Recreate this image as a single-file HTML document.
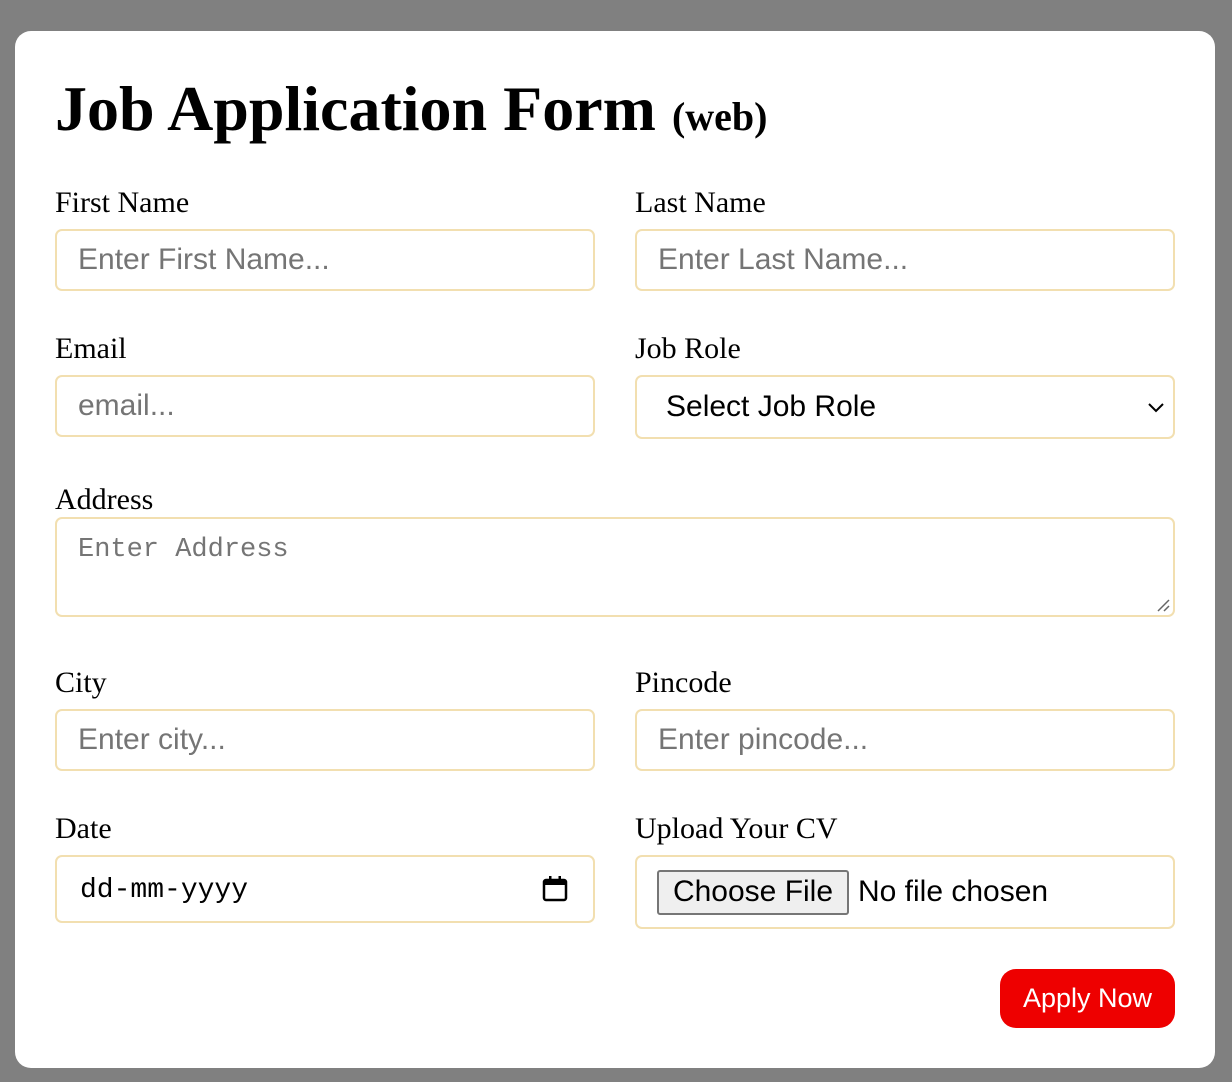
<!DOCTYPE html>
<html><head><meta charset="utf-8"><style>
*{box-sizing:border-box;margin:0;padding:0}
html,body{width:1232px;height:1082px;background:#808080;overflow:hidden}
.card{position:absolute;left:15px;top:31px;width:1200px;height:1037px;background:#fff;border-radius:16px}
.a{position:absolute}
h1{position:absolute;left:55px;top:77px;font:bold 64px/1 "Liberation Serif",serif;color:#000;white-space:nowrap}
h1 small{font-size:40px}
.lbl{position:absolute;font:30px/1 "Liberation Serif",serif;color:#000;white-space:nowrap}
.in{position:absolute;border:2px solid #f2dfb0;border-radius:7px;background:#fff;font:30px/1 "Liberation Sans",sans-serif;color:#757575;padding-left:21px;display:flex;align-items:center;white-space:nowrap}
</style></head><body>
<div class="card"></div>
<h1>Job Application Form <small>(web)</small></h1>

<div class="lbl" style="left:55px;top:188px">First Name</div>
<div class="in" style="left:55px;top:229px;width:540px;height:62px">Enter First Name...</div>
<div class="lbl" style="left:635px;top:188px">Last Name</div>
<div class="in" style="left:635px;top:229px;width:540px;height:62px">Enter Last Name...</div>

<div class="lbl" style="left:55px;top:334px">Email</div>
<div class="in" style="left:55px;top:375px;width:540px;height:62px">email...</div>
<div class="lbl" style="left:635px;top:334px">Job Role</div>
<div class="in" style="left:635px;top:375px;width:540px;height:64px;color:#000;padding-left:29px">Select Job Role
<svg class="a" style="right:8px;top:24px" width="18" height="12" viewBox="0 0 18 12"><path d="M2 3l7 7 7-7" fill="none" stroke="#000" stroke-width="2"/></svg></div>

<div class="lbl" style="left:55px;top:485px">Address</div>
<div class="in" style="left:55px;top:517px;width:1120px;height:100px;align-items:flex-start;padding-top:18px;font:27px/1 'Liberation Mono',monospace;color:#757575">Enter Address
<svg class="a" style="right:2px;bottom:2px" width="16" height="16" viewBox="0 0 16 16"><path d="M14 3L3 14M14 9L9 14" stroke="#666" stroke-width="1.5"/></svg></div>

<div class="lbl" style="left:55px;top:668px">City</div>
<div class="in" style="left:55px;top:709px;width:540px;height:62px">Enter city...</div>
<div class="lbl" style="left:635px;top:668px">Pincode</div>
<div class="in" style="left:635px;top:709px;width:540px;height:62px">Enter pincode...</div>

<div class="lbl" style="left:55px;top:814px">Date</div>
<div class="in" style="left:55px;top:855px;width:540px;height:68px;color:#000;font:28px/1 'Liberation Mono',monospace;padding-left:23px;padding-top:4px">dd-mm-yyyy
<svg class="a" style="left:485px;top:18px" width="26" height="28" viewBox="0 0 26 28"><rect x="2" y="5" width="22" height="20" rx="2" fill="none" stroke="#000" stroke-width="2.5"/><rect x="2" y="5" width="22" height="5" fill="#000"/><rect x="7" y="1" width="2.5" height="6" fill="#000"/><rect x="16.5" y="1" width="2.5" height="6" fill="#000"/></svg></div>
<div class="lbl" style="left:635px;top:814px">Upload Your CV</div>
<div class="in" style="left:635px;top:855px;width:540px;height:74px;color:#000;padding-left:20px">
<span style="display:inline-flex;align-items:center;justify-content:center;width:192px;height:45px;background:#efefef;border:2px solid #767676;border-radius:3px;margin-right:9px">Choose File</span>No file chosen</div>

<div class="a" style="left:1000px;top:969px;width:175px;height:59px;background:#ee0000;border-radius:16px;color:#fff;font:27px/59px 'Liberation Sans',sans-serif;text-align:center">Apply Now</div>
</body></html>
